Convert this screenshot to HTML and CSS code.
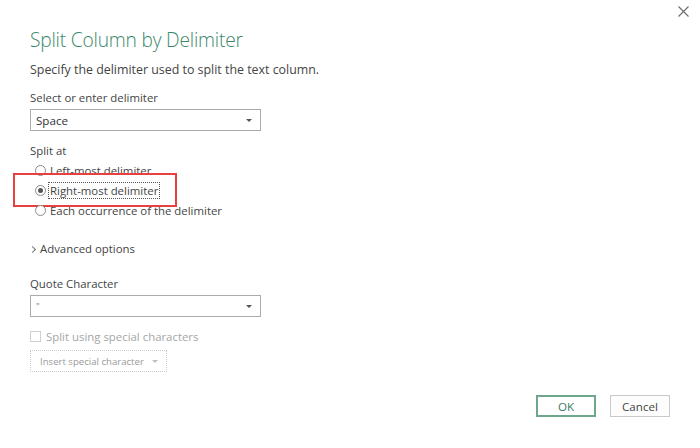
FILE: index.html
```html
<!DOCTYPE html>
<html>
<head>
<meta charset="utf-8">
<link rel="stylesheet" href="styles.css">
</head>
<body>
<div class="dialog">
  <div class="topbar">
    <svg class="close" width="11" height="11" viewBox="0 0 11 11"><path d="M0.5 0.5 L10.5 10.5 M10.5 0.5 L0.5 10.5" stroke="#6a6a6a" stroke-width="1.1" fill="none"/></svg>
  </div>
  <div class="content">
    <h1 class="title">Split Column by Delimiter</h1>
    <p class="subtitle">Specify the delimiter used to split the text column.</p>
    <div class="label first">Select or enter delimiter</div>
    <div class="select"><span class="select-text">Space</span><span class="caret"></span></div>
    <div class="label split">Split at</div>
    <div class="radios">
      <div class="radio-row"><span class="radio"></span><span class="radio-label">Left-most delimiter</span></div>
      <div class="radio-row selected"><span class="radio"></span><span class="radio-label focus">Right-most delimiter</span><span class="highlight"></span></div>
      <div class="radio-row"><span class="radio"></span><span class="radio-label">Each occurrence of the delimiter</span></div>
    </div>
    <div class="advanced"><span class="chev"></span><span>Advanced options</span></div>
    <div class="label quote">Quote Character</div>
    <div class="select"><span class="select-text small">"</span><span class="caret"></span></div>
    <div class="check-row"><span class="checkbox"></span><span>Split using special characters</span></div>
    <div class="insert-btn"><span>Insert special character</span><span class="caret light"></span></div>
    <div class="footer">
      <button class="btn ok">OK</button>
      <button class="btn cancel">Cancel</button>
    </div>
  </div>
</div>
</body>
</html>
```
FILE: styles.css
```css
* { box-sizing: border-box; }
html, body { margin: 0; padding: 0; background: #ffffff; }
body {
  width: 700px;
  height: 448px;
  overflow: hidden;
  font-family: "Open Sans", "Noto Sans", sans-serif;
  color: #444444;
}
.dialog {
  width: 700px;
  height: 448px;
  background: #ffffff;
}
.topbar {
  display: flex;
  justify-content: flex-end;
  height: 26px;
  padding: 6px 11px 0 0;
}
.close { display: block; }
.content {
  padding: 0 30px;
}
.title {
  margin: 0;
  font-weight: 300;
  font-size: 19.2px;
  line-height: 28px;
  color: #3a8869;
  letter-spacing: -0.2px;
}
.subtitle {
  margin: 7px 0 0 0;
  font-size: 12.4px;
  line-height: 18px;
  color: #444;
}
.label {
  font-size: 11.4px;
  line-height: 18px;
  color: #444;
}
.label.first { margin-top: 10px; }
.label.split { margin-top: 11px; }
.label.quote { margin-top: 17px; }
.select {
  margin-top: 2px;
  width: 231px;
  height: 22px;
  border: 1px solid #ababab;
  display: flex;
  align-items: center;
  justify-content: space-between;
  padding: 0 8px 0 5px;
  font-size: 11.6px;
  color: #333;
}
.select + .label { margin-top: 11px; }
.select-text.small { font-size: 9px; color: #777; }
.caret {
  width: 0; height: 0;
  border-left: 3px solid transparent;
  border-right: 3px solid transparent;
  border-top: 3px solid #555;
}
.caret.light { border-top-color: #c0c0c0; }
.radios { display: flex; flex-direction: column; }
.radio-row {
  position: relative;
  display: flex;
  align-items: center;
  height: 20px;
  font-size: 11.4px;
  color: #444;
}
.radio {
  width: 11px; height: 11px;
  border: 1px solid #8a8a8a;
  border-radius: 50%;
  margin: 0 4px 0 5px;
  background: #fff;
  display: flex;
  align-items: center;
  justify-content: center;
}
.selected .radio::after {
  content: "";
  width: 5px; height: 5px;
  border-radius: 50%;
  background: #555;
}
.radio-label.focus {
  outline: 1px dotted #555;
  outline-offset: 0;
  padding: 0 1px;
  margin-left: -1px;
}
.highlight {
  position: absolute;
  left: -17px;
  top: -7px;
  width: 164px;
  height: 34px;
  border: 2px solid #e8403f;
}
.advanced {
  margin-top: 20px;
  display: flex;
  align-items: center;
  font-size: 11.4px;
  line-height: 18px;
  color: #444;
}
.chev {
  width: 5px; height: 5px;
  border-right: 1px solid #777;
  border-top: 1px solid #777;
  transform: rotate(45deg);
  margin: 0 5px 0 0;
}
.check-row {
  margin-top: 10px;
  display: flex;
  align-items: center;
  height: 18px;
  font-size: 11.4px;
  color: #a6a6a6;
}
.checkbox {
  width: 11px; height: 11px;
  border: 1px solid #d0d0d0;
  margin-right: 5px;
}
.insert-btn {
  margin-top: 5px;
  width: 137px;
  height: 22px;
  border: 1px dotted #c8c8c8;
  display: flex;
  align-items: center;
  gap: 8px;
  padding-left: 9px;
  font-size: 9.6px;
  white-space: nowrap;
  color: #9a9a9a;
}
.footer {
  margin-top: 23px;
  display: flex;
  justify-content: flex-end;
  gap: 14px;
}
.btn {
  width: 60px;
  height: 22px;
  font-family: "Open Sans", "Noto Sans", sans-serif;
  font-size: 11.6px;
  color: #444;
  background: #fff;
  padding: 0;
}
.btn.ok {
  border: 2px solid #6ea68b;
  color: #3d7a5f;
}
.btn.cancel {
  border: 1px solid #c9c9c9;
  background: #fdfdfd;
}
```
